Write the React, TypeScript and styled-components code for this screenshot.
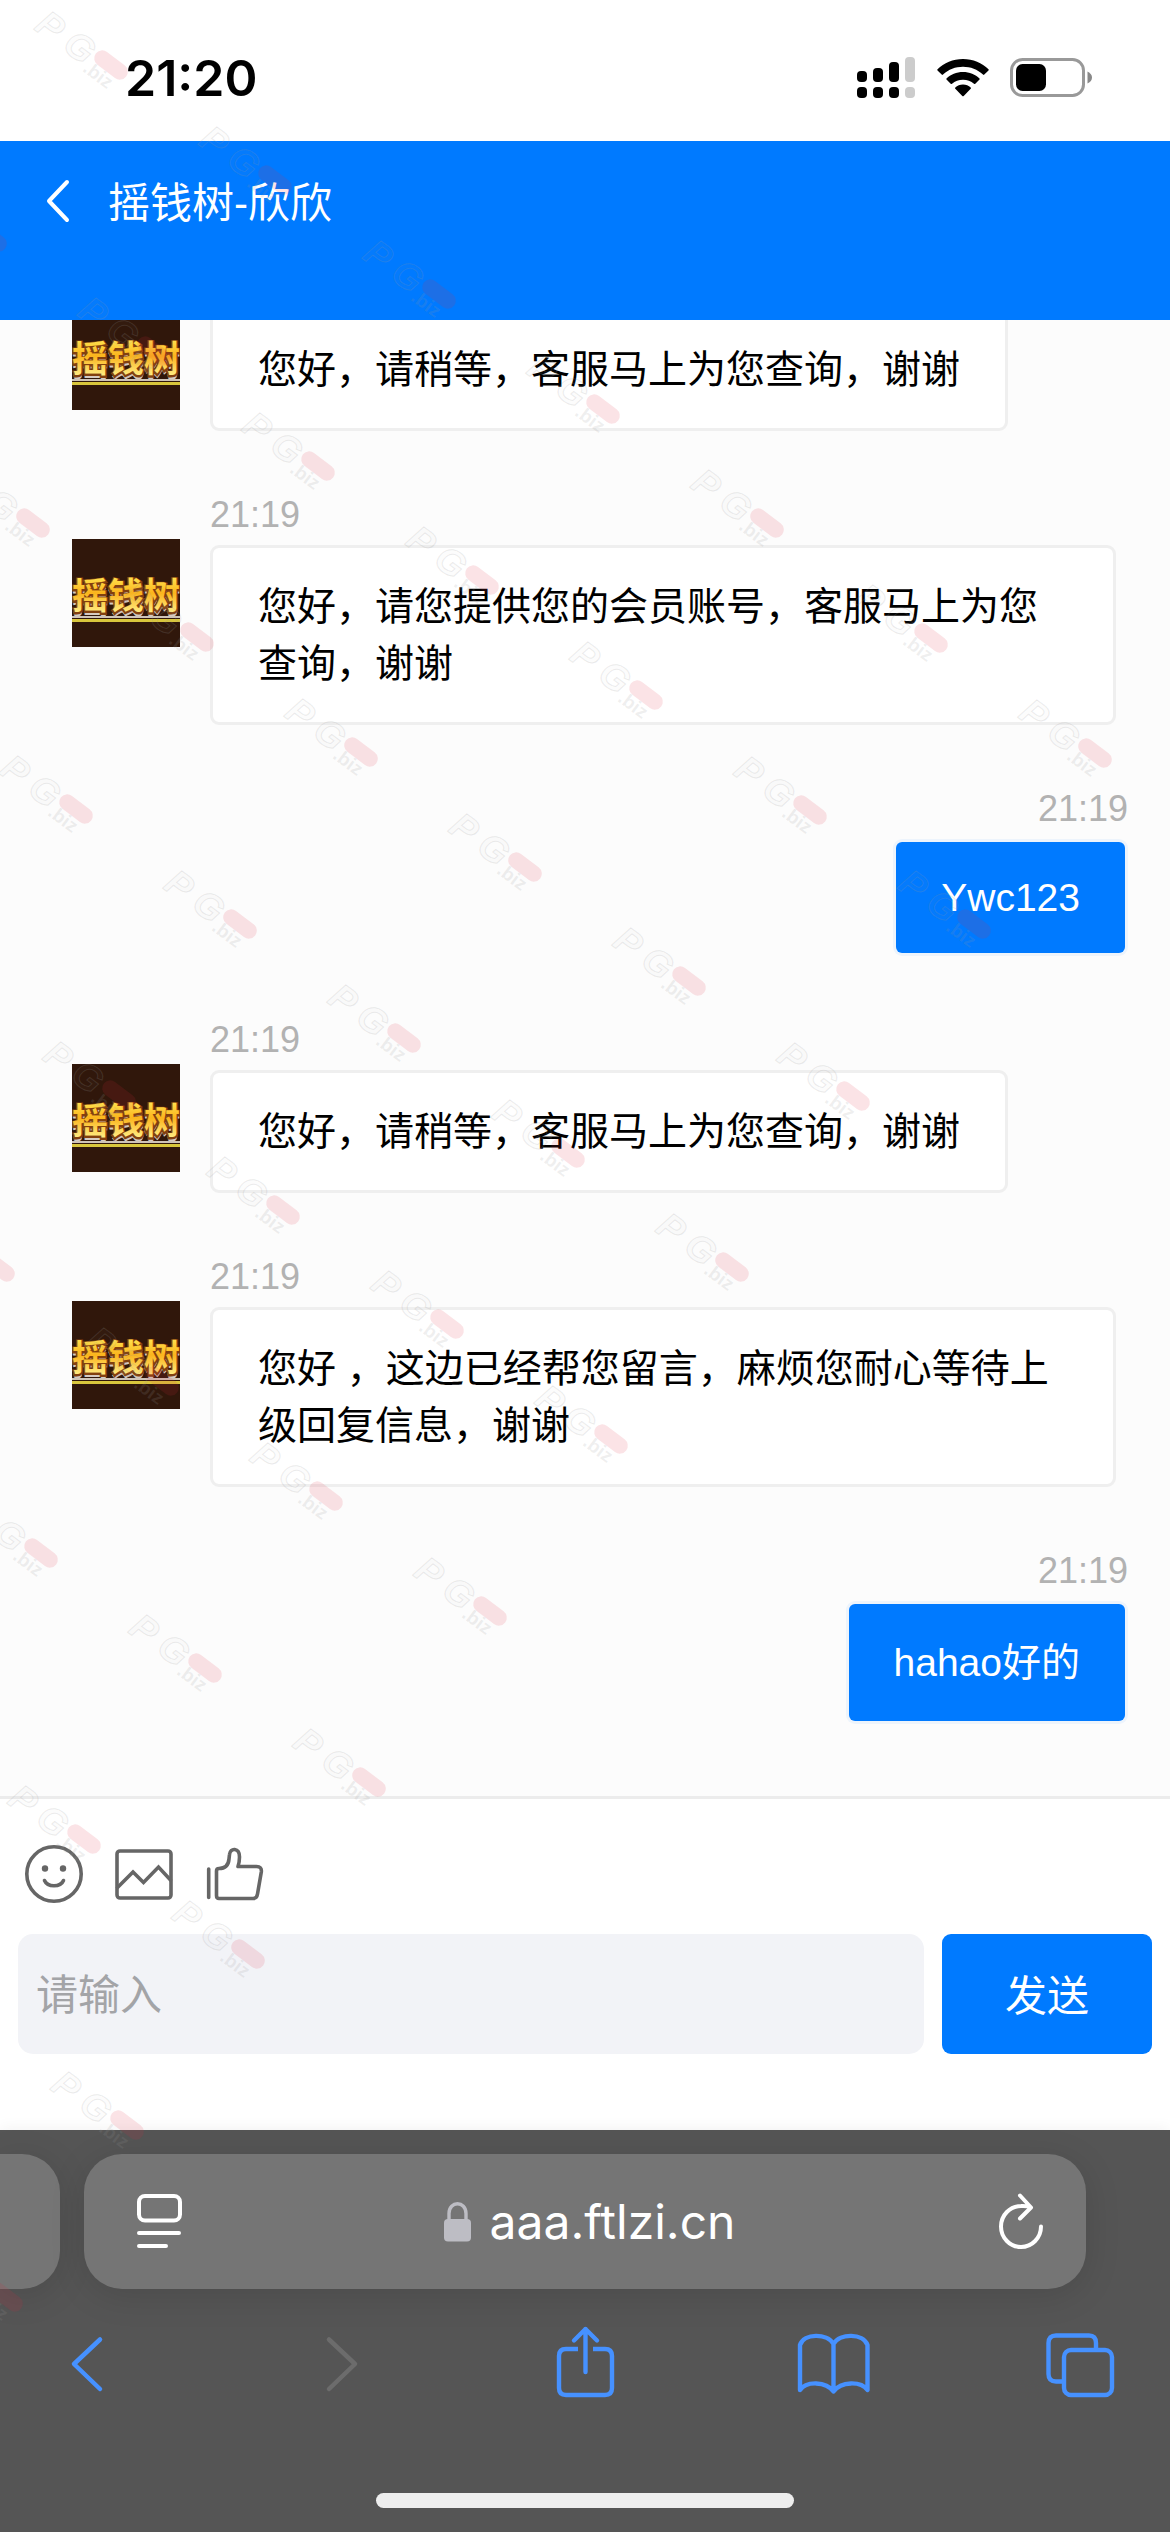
import React from 'react';
import styled, { createGlobalStyle } from 'styled-components';

const latinFirst = '"Liberation Sans", "Noto Sans CJK SC", sans-serif';
const systemUi = 'Inter, "Noto Sans CJK SC", sans-serif';

const GlobalStyle = createGlobalStyle`
  *, *::before, *::after { box-sizing: border-box; }
  body { margin: 0; background: #555; font-family: ${latinFirst}; }
  button { border: 0; padding: 0; background: none; font: inherit; color: inherit; cursor: pointer; }
  svg { display: block; }
`;

const Screen = styled.div`
  position: relative;
  display: flex;
  flex-direction: column;
  height: 100vh;
  overflow: hidden;
  background: #fff;
`;

const StatusBar = styled.div`
  display: flex;
  flex: none;
  align-items: center;
  justify-content: space-between;
  height: 141px;
  padding: 14px 78px 0 125px;
`;

const Clock = styled.time`
  font: 600 50px/60px ${systemUi};
  color: #000;
`;

const StatusIcons = styled.div`
  display: flex;
  align-items: center;
  gap: 21px;
`;

const Header = styled.header`
  display: flex;
  flex: none;
  align-items: flex-start;
  height: 179px;
  background: #007aff;
  color: #fff;
`;

const BackButton = styled.button`
  display: flex;
  align-items: center;
  height: 120px;
  padding: 0 38px 0 44px;
`;

const Title = styled.h1`
  margin: 0;
  font-size: 42px;
  font-weight: 400;
  line-height: 126px;
`;

const Chat = styled.main`
  display: flex;
  flex: 1;
  flex-direction: column;
  justify-content: flex-end;
  gap: 54px;
  min-height: 0;
  overflow: hidden;
  padding-bottom: 72px;
  background: #fcfcfc;
`;

const Message = styled.article<{ $mine?: boolean }>`
  display: flex;
  flex: none;
  gap: 30px;
  padding: ${p => (p.$mine ? '0 42px' : '0 54px 0 72px')};
`;

const AvatarFrame = styled.div`
  flex: none;
  width: 108px;
  height: 108px;
  margin-top: 54px;
`;

const MessageBody = styled.div<{ $mine?: boolean }>`
  display: flex;
  flex: 1;
  flex-direction: column;
  align-items: ${p => (p.$mine ? 'flex-end' : 'flex-start')};
  min-width: 0;
`;

const Stamp = styled.div`
  height: 60px;
  font-size: 36px;
  line-height: 60px;
  color: #b2b2b2;
`;

const Bubble = styled.div<{ $mine?: boolean; $latin?: boolean }>`
  padding: 30px 45px;
  border: 3px solid ${p => (p.$mine ? 'rgba(0, 122, 255, 0.06)' : '#efefef')};
  border-radius: 9px;
  background: ${p => (p.$mine ? '#007aff' : '#fff')};
  background-clip: padding-box;
  color: ${p => (p.$mine ? '#fff' : '#000')};
  font-size: 39px;
  line-height: ${p => (p.$latin ? '51px' : '57px')};
`;

const Composer = styled.form`
  flex: none;
  padding: 45px 18px 76px;
  border-top: 3px solid #ececec;
  background: #fff;
`;

const Tools = styled.div`
  display: flex;
  gap: 30px;
  padding-left: 6px;
  margin-bottom: 30px;
  color: #666;
`;

const InputRow = styled.div`
  display: flex;
  gap: 18px;
`;

const TextField = styled.input`
  flex: 1;
  min-width: 0;
  height: 120px;
  padding: 3px 18px 0;
  border: 0;
  border-radius: 15px;
  background: #f2f3f7;
  font: 42px ${latinFirst};
  color: #000;
  &::placeholder { color: #a3a4a7; opacity: 1; }
`;

const SendButton = styled.button`
  width: 210px;
  height: 120px;
  padding-bottom: 4px;
  border-radius: 9px;
  background: #007aff;
  color: #fff;
  font-size: 42px;
`;

const Browser = styled.footer`
  display: flex;
  flex: none;
  flex-direction: column;
  height: 402px;
  padding: 24px 0;
  background: #555;
  box-shadow: 0 -2px 14px rgba(0, 0, 0, 0.05);
`;

const TabStrip = styled.div`
  display: flex;
  gap: 24px;
  padding-right: 84px;
`;

const PreviousTab = styled.div`
  width: 60px;
  height: 135px;
  border-radius: 0 38px 38px 0;
  background: #757575;
  box-shadow: 0 6px 36px rgba(0, 0, 0, 0.12);
`;

const AddressBar = styled.div`
  display: flex;
  flex: 1;
  align-items: center;
  justify-content: space-between;
  height: 135px;
  padding: 0 42px 0 51px;
  border-radius: 38px;
  background: #757575;
  box-shadow: 0 6px 36px rgba(0, 0, 0, 0.12);
  color: #fff;
`;

const Address = styled.a`
  display: flex;
  align-items: center;
  gap: 18px;
  color: #fff;
  font: 400 48px/60px ${systemUi};
  text-decoration: none;
`;

const NavBar = styled.nav`
  display: flex;
  justify-content: space-between;
  padding: 33px 48px 0;
  color: #4691ff;
`;

const NavButton = styled.button`
  &:disabled { color: #6c6c6c; cursor: default; }
`;

const HomeIndicator = styled.div`
  align-self: center;
  width: 418px;
  height: 15px;
  margin-top: auto;
  border-radius: 8px;
  background: #eee;
`;

const WatermarkLayer = styled.svg`
  position: absolute;
  inset: 0;
  width: 100%;
  height: 100%;
  pointer-events: none;
`;

const stroke = {
  fill: 'none',
  stroke: 'currentColor',
  strokeLinecap: 'round' as const,
  strokeLinejoin: 'round' as const,
};

const SignalIcon = () => (
  <svg width="59" height="42" viewBox="0 0 59 42" aria-hidden="true">
    {[0, 1, 2, 3].map(i => {
      const tops = [14, 11, 5, 0];
      return (
        <g key={i} fill={i === 3 ? '#ccc' : '#000'}>
          <rect x={i * 16} y={tops[i]} width="10" height={25 - tops[i]} rx="4" />
          <rect x={i * 16} y="30" width="10" height="11" rx="4" />
        </g>
      );
    })}
  </svg>
);

const WifiIcon = () => (
  <svg width="52" height="38" viewBox="0 0 52 38" aria-hidden="true">
    <path d="M26 0C36 0 45 4 51.5 10.2Q52 10.8 51.5 11.4L47.3 15.6Q46.7 16.2 46 15.6C40.500 10.500 33.500 7.800 26 7.800S11.500 10.500 6 15.600Q5.300 16.200 4.700 15.600L.5 11.400Q0 10.800 .5 10.200C7 4 16 0 26 0Z" />
    <path d="M26 13C32.500 13 38.400 15.500 42.500 19.500Q43 20 42.500 20.600L38.300 24.800Q37.700 25.300 37 24.800C34 22.200 30.200 20.700 26 20.700S18 22.200 15 24.800Q14.300 25.300 13.700 24.800L9.500 20.600Q9 20 9.500 19.500C13.600 15.500 19.500 13 26 13Z" />
    <path d="M26 25.500C29 25.500 31.700 26.600 33.700 28.500Q34.300 29.200 33.700 29.800L26.700 36.900Q26 37.500 25.300 36.900L18.300 29.800Q17.700 29.200 18.300 28.500C20.300 26.600 23 25.500 26 25.500Z" />
  </svg>
);

const BatteryIcon = () => (
  <svg width="82" height="40" viewBox="0 0 82 40" aria-hidden="true">
    <rect x="1.500" y="1.500" width="72" height="36" rx="11" fill="none" stroke="#999" strokeWidth="3" />
    <rect x="6" y="6" width="30" height="27" rx="6.500" />
    <path d="M77.500 13.500C80.500 15 82 17 82 19.500S80.500 24 77.500 25.500Z" fill="#888" />
  </svg>
);

const HeaderChevron = () => (
  <svg width="26" height="44" viewBox="0 0 26 44" aria-hidden="true">
    <path d="M23 3L5 22L23 41" {...stroke} strokeWidth="4" />
  </svg>
);

const SmileIcon = () => (
  <svg width="60" height="60" viewBox="0 0 60 60" aria-hidden="true">
    <circle cx="30" cy="30" r="27.200" {...stroke} strokeWidth="3.600" />
    <circle cx="21" cy="24.500" r="3.200" fill="currentColor" />
    <circle cx="39" cy="24.500" r="3.200" fill="currentColor" />
    <path d="M20.500 36.500C23.500 43.500 36.500 43.500 39.500 36.500" {...stroke} strokeWidth="3.600" />
  </svg>
);

const PictureIcon = () => (
  <svg width="60" height="60" viewBox="0 0 60 60" aria-hidden="true">
    <rect x="3" y="7" width="54" height="47" rx="3" {...stroke} strokeWidth="3.600" />
    <path d="M3.500 43.500L19 28L29.500 38.500L44.500 23L56.500 36" {...stroke} strokeLinejoin="miter" strokeWidth="3.600" />
  </svg>
);

const ThumbIcon = () => (
  <svg width="60" height="60" viewBox="0 0 60 60" aria-hidden="true">
    <path
      d="M4.700 25V53.500M12.500 51.500V27Q12.500 24.500 15 24.500C22 24.500 24.500 21 25 15L25.500 10.500C26 3.500 35.500 3.500 35.500 13Q35.500 18 34 22.500H52.500Q58 22.500 57.300 28L53.500 50Q52.800 54.500 49 54.500H15Q12.500 54.500 12.500 51.500Z"
      {...stroke}
      strokeWidth="3.600"
    />
  </svg>
);

const PageMenuIcon = () => (
  <svg width="48" height="56" viewBox="0 0 48 56" aria-hidden="true">
    <rect x="4" y="2" width="41" height="24.500" rx="6" {...stroke} strokeWidth="4" />
    <path d="M4 39H44M4 52H31" {...stroke} strokeWidth="4" />
  </svg>
);

const LockIcon = () => (
  <svg width="28" height="40" viewBox="0 0 28 40" fill="#bdbdc4" aria-hidden="true">
    <rect x="0" y="17" width="27" height="22.500" rx="4" />
    <path d="M5 19V11.500C5-1.500 22-1.500 22 11.500V19" fill="none" stroke="#bdbdc4" strokeWidth="3.400" />
  </svg>
);

const ReloadIcon = () => (
  <svg width="48" height="58" viewBox="0 0 48 58" aria-hidden="true">
    <path d="M45 33.500A20 20.500 0 1 1 25 13Q31 12.600 35 14.500M24 2.500L35 14.500L24 25.500" {...stroke} strokeWidth="4" />
  </svg>
);

const BackIcon = () => (
  <svg width="80" height="80" viewBox="0 0 80 80" aria-hidden="true">
    <path d="M52 17.500L26 42L52 67" {...stroke} strokeWidth="4.500" />
  </svg>
);

const ForwardIcon = () => (
  <svg width="80" height="80" viewBox="0 0 80 80" aria-hidden="true">
    <path d="M32 17.500L58 42L32 67" {...stroke} strokeWidth="4.500" />
  </svg>
);

const ShareIcon = () => (
  <svg width="80" height="80" viewBox="0 0 80 80" aria-hidden="true">
    <path d="M33 27H21Q14 27 14 34V66Q14 73 21 73H60Q67 73 67 66V34Q67 27 60 27H48" {...stroke} strokeLinecap="butt" strokeWidth="4.400" />
    <path d="M40.500 50V7M29 18.500L40.500 7L52 18.500" {...stroke} strokeWidth="4.400" />
  </svg>
);

const BookIcon = () => (
  <svg width="80" height="80" viewBox="0 0 80 80" aria-hidden="true">
    <path d="M39.500 22C33 11 10 11 6 23V68C12 59 32 59 39.500 69.500C47 59 67 59 73.500 68V23C69 11 46 11 39.500 22ZM39.500 22V69" {...stroke} strokeWidth="4.400" />
  </svg>
);

const TabsIcon = () => (
  <svg width="80" height="80" viewBox="0 0 80 80" aria-hidden="true">
    <rect x="22" y="28" width="48" height="45" rx="7" {...stroke} strokeWidth="4.400" />
    <path d="M54 27V21Q54 13.500 47 13.500H14Q6.500 13.500 6.500 21V52Q6.500 59.500 14 59.500H21" {...stroke} strokeLinecap="butt" strokeWidth="4.400" />
  </svg>
);

const Avatar = () => (
  <svg width="108" height="108" viewBox="0 0 108 108" role="img" aria-label="摇钱树">
    <defs>
      <linearGradient id="gold" x1="0" y1="0" x2="0" y2="1">
        <stop offset="0.2" stopColor="#ffe14d" />
        <stop offset="0.5" stopColor="#fbb41c" />
        <stop offset="0.9" stopColor="#fff08a" />
      </linearGradient>
    </defs>
    <rect width="108" height="108" fill="#30170b" />
    <g fontFamily='"Noto Sans CJK SC", sans-serif' fontSize="36" fontWeight="700" textAnchor="middle">
      <text x="54" y="74" fill="#d6cbc2" stroke="#d6cbc2" strokeWidth="1">摇钱树</text>
      <text x="54" y="71" fill="#82400f" stroke="#82400f" strokeWidth="3">摇钱树</text>
      <text x="54" y="70" fill="url(#gold)">摇钱树</text>
    </g>
    <rect y="77" width="108" height="2" fill="#cfc4b8" />
    <rect y="80" width="108" height="3" fill="#d9c63c" />
  </svg>
);

// Diagonal grid of stamps: each row runs down and to the right.
const marks: { x: number; y: number }[] = [];
for (let row = 0; row < 10; row++) {
  for (let col = 0; col < 7; col++) {
    const x = 111 + 164 * col - 121 * row;
    if (x > -16) marks.push({ x, y: Math.round(65 + 114.6 * col + 171.6 * row) });
  }
}

const Watermark = () => (
  <WatermarkLayer aria-hidden="true">
    {marks.map(m => (
      <g key={`${m.x}-${m.y}`} transform={`translate(${m.x} ${m.y}) rotate(37)`}>
        <g fontFamily='"Liberation Sans", sans-serif' fontWeight="700" fill="#aaa" fillOpacity="0.04" stroke="#999" strokeOpacity="0.2" strokeWidth="1">
          <text x="-84" y="18" fontSize="37" fontStyle="italic">P</text>
          <text x="-50" y="17" fontSize="37" fontStyle="italic">G</text>
          <text x="-20" y="22" fontSize="19" stroke="none" fill="#999" fillOpacity="0.16">.biz</text>
        </g>
        <rect x="-19" y="-8" width="38" height="16" rx="8" fill="#e0283c" fillOpacity="0.13" />
      </g>
    ))}
  </WatermarkLayer>
);

type ChatMessage = { text: string; time?: string; mine?: boolean; latin?: boolean };

const messages: ChatMessage[] = [
  { text: '您好，请稍等，客服马上为您查询，谢谢' },
  { time: '21:19', text: '您好，请您提供您的会员账号，客服马上为您查询，谢谢' },
  { time: '21:19', text: 'Ywc123', mine: true, latin: true },
  { time: '21:19', text: '您好，请稍等，客服马上为您查询，谢谢' },
  { time: '21:19', text: '您好 ，这边已经帮您留言，麻烦您耐心等待上级回复信息，谢谢' },
  { time: '21:19', text: 'hahao好的', mine: true },
];

export default function App() {
  return (
    <Screen lang="zh-CN">
      <GlobalStyle />
      <StatusBar>
        <Clock>21:20</Clock>
        <StatusIcons>
          <SignalIcon />
          <WifiIcon />
          <BatteryIcon />
        </StatusIcons>
      </StatusBar>
      <Header>
        <BackButton type="button" aria-label="返回"><HeaderChevron /></BackButton>
        <Title>摇钱树-欣欣</Title>
      </Header>
      <Chat>
        {messages.map((m, i) => (
          <Message key={i} $mine={m.mine}>
            {!m.mine && <AvatarFrame><Avatar /></AvatarFrame>}
            <MessageBody $mine={m.mine}>
              <Stamp>{m.time}</Stamp>
              <Bubble $mine={m.mine} $latin={m.latin}>{m.text}</Bubble>
            </MessageBody>
          </Message>
        ))}
      </Chat>
      <Composer onSubmit={e => e.preventDefault()}>
        <Tools>
          <button type="button" aria-label="表情"><SmileIcon /></button>
          <button type="button" aria-label="图片"><PictureIcon /></button>
          <button type="button" aria-label="评价"><ThumbIcon /></button>
        </Tools>
        <InputRow>
          <TextField type="text" placeholder="请输入" aria-label="请输入" />
          <SendButton type="submit">发送</SendButton>
        </InputRow>
      </Composer>
      <Browser>
        <TabStrip>
          <PreviousTab />
          <AddressBar>
            <button type="button" aria-label="页面菜单"><PageMenuIcon /></button>
            <Address href="#"><LockIcon />aaa.ftlzi.cn</Address>
            <button type="button" aria-label="刷新"><ReloadIcon /></button>
          </AddressBar>
        </TabStrip>
        <NavBar>
          <NavButton type="button" aria-label="后退"><BackIcon /></NavButton>
          <NavButton type="button" aria-label="前进" disabled><ForwardIcon /></NavButton>
          <NavButton type="button" aria-label="分享"><ShareIcon /></NavButton>
          <NavButton type="button" aria-label="书签"><BookIcon /></NavButton>
          <NavButton type="button" aria-label="标签页"><TabsIcon /></NavButton>
        </NavBar>
        <HomeIndicator />
      </Browser>
      <Watermark />
    </Screen>
  );
}
